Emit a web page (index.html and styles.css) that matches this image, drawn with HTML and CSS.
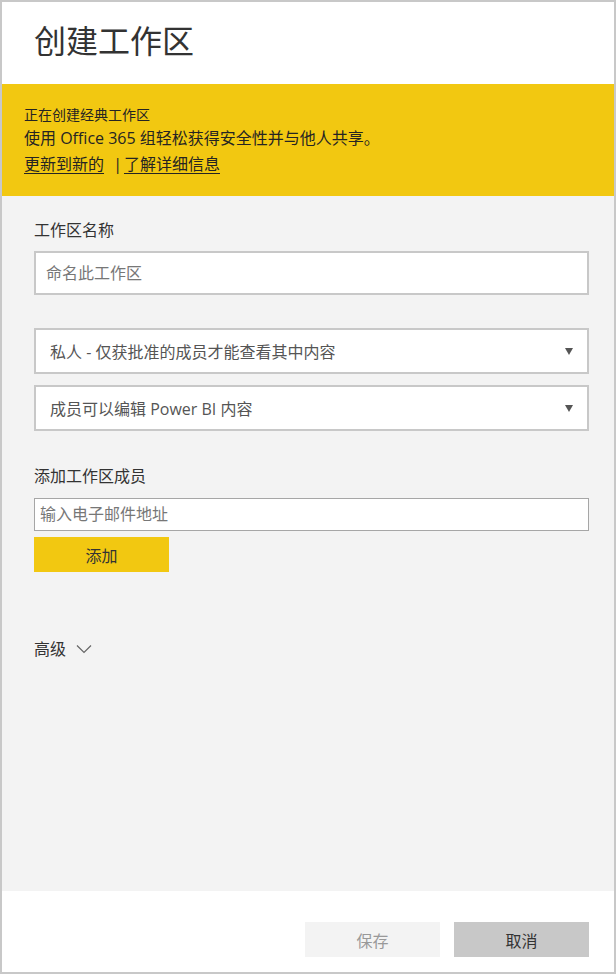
FILE: index.html
```html
<!DOCTYPE html>
<html lang="zh-CN">
<head>
<meta charset="utf-8">
<title>创建工作区</title>
<link rel="stylesheet" href="styles.css">
</head>
<body>
<div class="panel">
  <header class="header">
    <h1 class="title">创建工作区</h1>
  </header>
  <section class="banner">
    <div class="banner-sub">正在创建经典工作区</div>
    <div class="banner-main">使用 Office 365 组轻松获得安全性并与他人共享。</div>
    <div class="banner-links"><a class="link" href="#">更新到新的</a> <span class="sep">|</span><a class="link" href="#">了解详细信息</a></div>
  </section>
  <main class="body">
    <label class="label label-name">工作区名称</label>
    <div class="field field-name">命名此工作区</div>
    <div class="select select-1"><span>私人 - 仅获批准的成员才能查看其中内容</span><span class="caret"></span></div>
    <div class="select select-2"><span>成员可以编辑 Power BI 内容</span><span class="caret"></span></div>
    <label class="label label-members">添加工作区成员</label>
    <div class="field field-email">输入电子邮件地址</div>
    <button class="btn-add">添加</button>
    <div class="advanced">高级
      <svg class="chev" width="16" height="10" viewBox="0 0 16 10"><path d="M1 1.5 L8 8.5 L15 1.5" fill="none" stroke="#666" stroke-width="1.2"/></svg>
    </div>
  </main>
  <footer class="footer">
    <button class="btn btn-save">保存</button>
    <button class="btn btn-cancel">取消</button>
  </footer>
</div>
</body>
</html>
```

FILE: styles.css
```css
* { box-sizing: border-box; }
html, body { margin: 0; padding: 0; }
body {
  font-family: "Open Sans", "Noto Sans CJK SC", sans-serif;
  color: #333;
  background: #fff;
}
.panel {
  width: 616px;
  height: 974px;
  border: 2px solid #c8c8c8;
  display: flex;
  flex-direction: column;
  background: #fff;
}
.header {
  height: 82px;
  padding: 19px 0 0 32px;
}
.title {
  margin: 0;
  font-size: 32px;
  font-weight: 400;
  line-height: 40px;
  color: #333;
}
.banner {
  height: 112px;
  background: #f2c811;
  padding: 20px 0 0 22px;
  color: #252423;
}
.banner-sub { font-size: 14px; line-height: 22px; }
.banner-main { font-size: 16px; line-height: 24px; }
.banner-links { font-size: 16px; line-height: 26px; margin-top: 1px; }
.link { color: #252423; text-decoration: underline; text-underline-offset: 3px; }
.sep { margin: 0 2px 0 5px; }
.body {
  flex: 1;
  background: #f3f3f3;
  padding: 20px 25px 0 32px;
  display: flex;
  flex-direction: column;
}
.label {
  font-size: 16px;
  line-height: 28px;
  color: #333;
}
.label-name { margin-bottom: 7px; }
.field {
  background: #fff;
  color: #777;
  font-size: 16px;
}
.field-name {
  height: 44px;
  border: 2px solid #c8c8c8;
  padding-left: 10px;
  line-height: 40px;
}
.select {
  height: 46px;
  border: 2px solid #c8c8c8;
  background: #fff;
  color: #555;
  font-size: 16px;
  padding: 0 14px 0 14px;
  display: flex;
  align-items: center;
  justify-content: space-between;
}
.select-1 { margin-top: 33px; }
.select-2 { margin-top: 11px; }
.caret {
  width: 0; height: 0;
  border-left: 4px solid transparent;
  border-right: 4px solid transparent;
  border-top: 7px solid #555;
  margin-top: 1px;
}
.label-members { margin-top: 31px; margin-bottom: 8px; }
.field-email {
  height: 33px;
  border: 1px solid #a6a6a6;
  padding-left: 5px;
  line-height: 31px;
}
.btn-add {
  margin-top: 6px;
  width: 135px;
  height: 35px;
  border: none;
  background: #f2c811;
  color: #333;
  font-family: inherit;
  font-size: 16px;
  padding: 0;
}
.advanced {
  margin-top: 63px;
  font-size: 16px;
  line-height: 28px;
  color: #333;
  display: flex;
  align-items: center;
  gap: 10px;
}
.footer {
  height: 81px;
  display: flex;
  justify-content: flex-end;
  align-items: flex-start;
  gap: 14px;
  padding: 31px 25px 0 0;
  background: #fff;
}
.btn {
  width: 135px;
  height: 35px;
  border: none;
  font-family: inherit;
  font-size: 16px;
  padding: 0;
}
.btn-save { background: #f3f3f3; color: #999; }
.btn-cancel { background: #c8c8c8; color: #333; }
```
